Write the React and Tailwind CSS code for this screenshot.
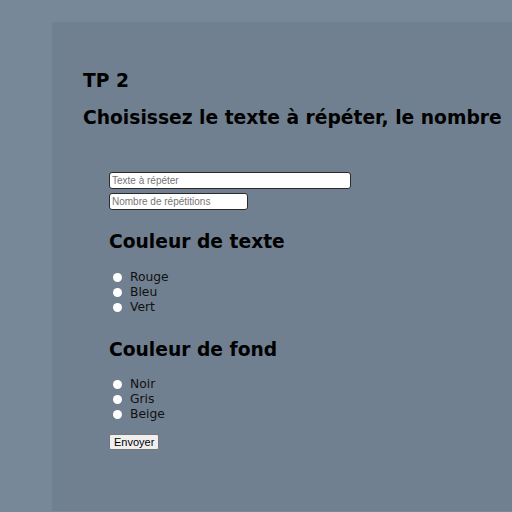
import React from 'react';

const couleursTexte = ['Rouge', 'Bleu', 'Vert'];
const couleursFond = ['Noir', 'Gris', 'Beige'];

const RadioGroup = ({ name, options }) => (
  <div className="text-[12.3px] leading-[15px] text-[#111]">
    {options.map((opt) => (
      <label key={opt} className="flex items-center h-[15px]">
        <input
          type="radio"
          name={name}
          value={opt}
          className="appearance-none w-[9px] h-[9px] rounded-full bg-white ml-[4px] mr-[8px] mt-[-1px]"
        />
        <span>{opt}</span>
      </label>
    ))}
  </div>
);

export default function App() {
  return (
    <div className="min-h-screen bg-[#778899] pt-[22px] pl-[52px] pb-[1px] overflow-hidden font-['DejaVu_Sans',sans-serif]">
      <div className="bg-[#708090] h-[489px] pl-[31px] pt-[48px] whitespace-nowrap overflow-hidden">
        <h3 className="text-[18.7px] leading-[22px] font-bold text-black">TP 2</h3>
        <h3 className="mt-[15px] text-[18.7px] leading-[22px] font-bold text-black">
          Choisissez le texte à répéter, le nombre
        </h3>

        <form className="pl-[26px] mt-[43px]" onSubmit={(e) => e.preventDefault()}>
          <input
            type="text"
            placeholder="Texte à répéter"
            className="block w-[242px] h-[17px] bg-white border border-[#2a2a2a] rounded-[3px] px-[2px] text-[10px] font-['Liberation_Sans',sans-serif] placeholder:text-[#757575] outline-none"
          />
          <input
            type="number"
            placeholder="Nombre de répétitions"
            className="block mt-[4px] w-[139px] h-[17px] bg-white border border-[#2a2a2a] rounded-[3px] px-[2px] text-[10px] font-['Liberation_Sans',sans-serif] placeholder:text-[#757575] outline-none"
          />

          <h3 className="mt-[21px] text-[18.7px] leading-[22px] font-bold text-black">Couleur de texte</h3>
          <div className="mt-[17px]">
            <RadioGroup name="texte" options={couleursTexte} />
          </div>

          <h3 className="mt-[24px] text-[18.7px] leading-[22px] font-bold text-black">Couleur de fond</h3>
          <div className="mt-[16px]">
            <RadioGroup name="fond" options={couleursFond} />
          </div>

          <button
            type="submit"
            className="block mt-[12px] h-[16px] px-[4px] bg-[#efefef] border border-[#767676] rounded-[2px] text-[11px] leading-[14px] text-black font-['Liberation_Sans',sans-serif]"
          >
            Envoyer
          </button>
        </form>
      </div>
    </div>
  );
}
